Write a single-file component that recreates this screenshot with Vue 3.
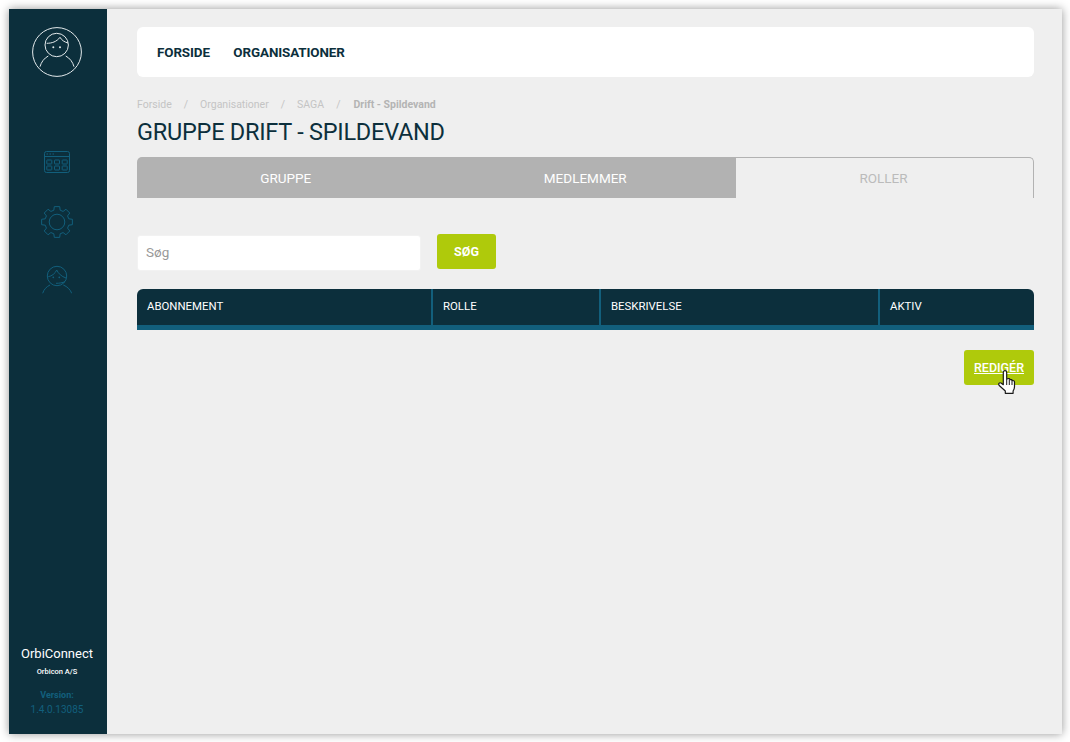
<script setup>
const crumbs = ['Forside', 'Organisationer', 'SAGA']
const tabs = [
  { label: 'GRUPPE' },
  { label: 'MEDLEMMER' },
  { label: 'ROLLER', active: true }
]
const cols = [
  { label: 'ABONNEMENT', cls: 'c1' },
  { label: 'ROLLE', cls: 'c2' },
  { label: 'BESKRIVELSE', cls: 'c3' },
  { label: 'AKTIV', cls: 'c4' }
]
const cells = [3.8, 11.5, 19.2].flatMap((x) => [10, 16].map((y) => ({ x, y })))

const polar = (r, deg) => {
  const a = (deg - 90) * Math.PI / 180
  return `${(17 + r * Math.cos(a)).toFixed(2)} ${(17 + r * Math.sin(a)).toFixed(2)}`
}
const gearPath = Array.from({ length: 8 }, (_, i) => {
  const c = i * 45
  return `${i ? 'L' : 'M'}${polar(12.2, c - 15)} L${polar(15.6, c - 10)} L${polar(15.6, c + 10)} L${polar(12.2, c + 15)}`
}).join(' ') + ' Z'
</script>

<template>
  <div class="page">
    <div class="window">
      <aside class="sidebar">
        <svg class="logo" width="50" height="50" viewBox="0 0 50 50" fill="none" stroke="#e4eaec" stroke-width="1">
          <circle cx="25" cy="25" r="24.4" />
          <circle cx="24.700" cy="18" r="11.700" />
          <path d="M14.700 16.300c5 0 10-1.500 13.300-6 1.500 2.800 4.500 4.800 8 5.700" />
          <path d="M8 39.700c1.200-4.600 4.200-8.600 8.300-10.700M42 39.700c-1.200-4.600-4.200-8.600-8.300-10.700" />
          <circle cx="21.300" cy="20.300" r="1" fill="#e4eaec" stroke="none" />
          <circle cx="28" cy="20.300" r="1" fill="#e4eaec" stroke="none" />
        </svg>

        <nav class="side-icons">
          <svg width="28" height="24" viewBox="0 0 28 24" fill="none" stroke="#125f7c" stroke-width="1">
            <rect x="1.500" y="1.500" width="25" height="21" rx="2" />
            <path d="M1.500 6.500h25" />
            <path d="M3.500 4h1.500M6.500 4h1.500M9.500 4h1.500" />
            <rect v-for="c in cells" :key="`${c.x}-${c.y}`" :x="c.x" :y="c.y" width="5" height="4" rx="0.500" />
          </svg>
          <svg class="gear" width="34" height="34" viewBox="0 0 34 34" fill="none" stroke="#125f7c" stroke-width="1">
            <circle cx="17" cy="17" r="7.800" />
            <path :d="gearPath" stroke-linejoin="round" />
          </svg>
          <svg width="30" height="30" viewBox="0 0 30 30" fill="none" stroke="#125f7c" stroke-width="1">
            <circle cx="15" cy="11" r="9.700" />
            <path d="M6.300 11.700c3.500-.7 6.800-3 8.400-6.700 1.600 3.500 4.800 6.500 9.300 8" />
            <path d="M14 18.300c3.500 0 6.500-.5 9-1.600" />
            <path d="M.7 28.300c1-3.600 3.700-6.600 7.300-8.300M29.700 28.300c-1.200-3.600-4.600-6.800-8.400-8.300" />
            <circle cx="11.300" cy="12.300" r=".9" fill="#125f7c" stroke="none" />
            <circle cx="17.300" cy="12.300" r=".9" fill="#125f7c" stroke="none" />
          </svg>
        </nav>

        <footer class="side-foot">
          <div class="brand">OrbiConnect</div>
          <div class="company">Orbicon A/S</div>
          <div class="ver-label">Version:</div>
          <div class="ver">1.4.0.13085</div>
        </footer>
      </aside>

      <main class="content">
        <header class="topnav">
          <a class="topnav-link">FORSIDE</a>
          <a class="topnav-link">ORGANISATIONER</a>
        </header>

        <div class="crumbs">
          <template v-for="c in crumbs" :key="c">
            <span>{{ c }}</span>
            <span class="sep">/</span>
          </template>
          <span class="current">Drift - Spildevand</span>
        </div>

        <h1 class="title">GRUPPE DRIFT - SPILDEVAND</h1>

        <div class="tabs">
          <div v-for="t in tabs" :key="t.label" class="tab" :class="{ active: t.active }">{{ t.label }}</div>
        </div>

        <div class="search">
          <input class="search-input" type="text" placeholder="Søg" />
          <button class="btn search-btn">SØG</button>
        </div>

        <div class="table-head">
          <div v-for="c in cols" :key="c.label" class="th" :class="c.cls">{{ c.label }}</div>
        </div>

        <div class="actions">
          <button class="btn edit-btn">
            REDIGÉR
            <svg class="cursor" width="18" height="24" viewBox="0 0 18 24">
              <path d="M7 .6c1 0 1.700.8 1.700 1.800v6.400l1.300-.2c.9-.3 1.800 0 2 .8l.2.3c.9-.4 1.900 0 2.100.9.900-.3 2.200.3 2.200 1.400v4.700c0 1.700-.6 3-1.400 4.300v2.300H7.300v-2.300L1.500 15.800c-1.700-2-.2-3.600 1.500-2.800l2.300 1.700V2.400C5.300 1.400 6 .6 7 .6z" fill="#fff" stroke="#1a1a1a" stroke-width="1.200" stroke-linejoin="round" />
              <path d="M8.700 9v6M11.300 9.500v5.500M14 10v5" stroke="#1a1a1a" stroke-width="1" fill="none" />
            </svg>
          </button>
        </div>
      </main>
    </div>
  </div>
</template>

<style>
html, body { margin: 0; background: #fff; }
</style>

<style scoped>
.page {
  box-sizing: border-box;
  width: 1070px;
  height: 742px;
  padding: 9px 8px 8px 9px;
  background: #fff;
  font-family: Roboto, "Open Sans", sans-serif;
  overflow: hidden;
}
.window {
  display: flex;
  height: 100%;
  background: #efefef;
  box-shadow: 0 0 9px rgba(0, 0, 0, 0.42);
}
.sidebar {
  box-sizing: border-box;
  flex: 0 0 98px;
  display: flex;
  flex-direction: column;
  align-items: center;
  padding-right: 2px;
  background: #0c2f3c;
}
.logo { margin-top: 18px; }
.side-icons {
  display: flex;
  flex-direction: column;
  align-items: center;
  margin-top: 73px;
  gap: 26px;
}
.gear { margin-top: 5px; }
.side-foot {
  margin-top: auto;
  padding-bottom: 17px;
  text-align: center;
  color: #fff;
}
.brand { font-size: 13px; line-height: 18px; }
.company { font-size: 7.500px; font-weight: 500; line-height: 12px; margin-top: 3px; }
.ver-label { font-size: 9px; font-weight: 700; line-height: 12px; margin-top: 11px; color: #125f7c; }
.ver { font-size: 10px; line-height: 14px; margin-top: 2px; color: #125f7c; }

.content {
  flex: 1;
  padding: 18px 28px 0 30px;
  min-width: 0;
}
.topnav {
  display: flex;
  align-items: center;
  gap: 23.500px;
  height: 50px;
  padding: 0 20px;
  background: #fff;
  border-radius: 6px;
}
.topnav-link {
  font-size: 13.400px;
  font-weight: 700;
  color: #0c2f3c;
  letter-spacing: -0.1px;
}
.crumbs {
  display: flex;
  align-items: center;
  margin-top: 20px;
  height: 14px;
  font-size: 10.500px;
  color: #c4c4c4;
}
.sep { margin: 0 12px; }
.current { margin-left: 1px; font-weight: 700; color: #b4b4b4; }
.title {
  margin: 7px 0 0;
  font-size: 23.500px;
  line-height: 28px;
  font-weight: 400;
  color: #0c2f3c;
  letter-spacing: -0.25px;
}
.tabs {
  display: flex;
  margin-top: 11px;
  height: 41px;
}
.tab {
  box-sizing: border-box;
  flex: 0 0 299.500px;
  display: flex;
  align-items: center;
  justify-content: center;
  padding-right: 2px;
  background: #b2b2b2;
  color: #fff;
  font-size: 13.500px;
}
.tab:first-child { border-radius: 5px 0 0 0; }
.tab.active {
  flex: 1;
  background: transparent;
  color: #bbb;
  border: 1px solid #b2b2b2;
  border-width: 1px 1px 0 0;
  border-radius: 0 5px 0 0;
}
.search {
  display: flex;
  align-items: flex-start;
  margin-top: 36px;
  gap: 16px;
}
.search-input {
  box-sizing: border-box;
  width: 284px;
  height: 36px;
  margin-top: 1px;
  padding: 0 8px 2px;
  border: 1px solid #f2f2f2;
  border-radius: 3px;
  background: #fff;
  font-family: inherit;
  font-size: 13.500px;
  outline: none;
}
.search-input::placeholder { color: #999; opacity: 1; }
.btn {
  height: 35px;
  border: 0;
  border-radius: 3px;
  background: #afca0b;
  color: #fff;
  font-family: inherit;
  font-size: 12.500px;
  font-weight: 700;
  padding: 0;
}
.search-btn { width: 59px; }
.table-head {
  box-sizing: border-box;
  display: flex;
  height: 41px;
  margin-top: 18px;
  background: #0c2f3c;
  border-bottom: 5px solid #125f7c;
  border-radius: 6px 6px 0 0;
}
.th {
  box-sizing: border-box;
  display: flex;
  align-items: center;
  padding: 0 0 3px 10px;
  color: #fff;
  font-size: 11.400px;
  border-right: 2px solid #125f7c;
}
.c1 { width: 296px; }
.c2 { width: 168px; }
.c3 { width: 279px; }
.c4 { flex: 1; border-right: 0; }
.actions {
  display: flex;
  justify-content: flex-end;
  margin-top: 20px;
}
.edit-btn {
  position: relative;
  width: 70px;
  font-weight: 500;
  text-decoration: underline;
}
.cursor {
  position: absolute;
  left: 34px;
  top: 20px;
}
</style>
